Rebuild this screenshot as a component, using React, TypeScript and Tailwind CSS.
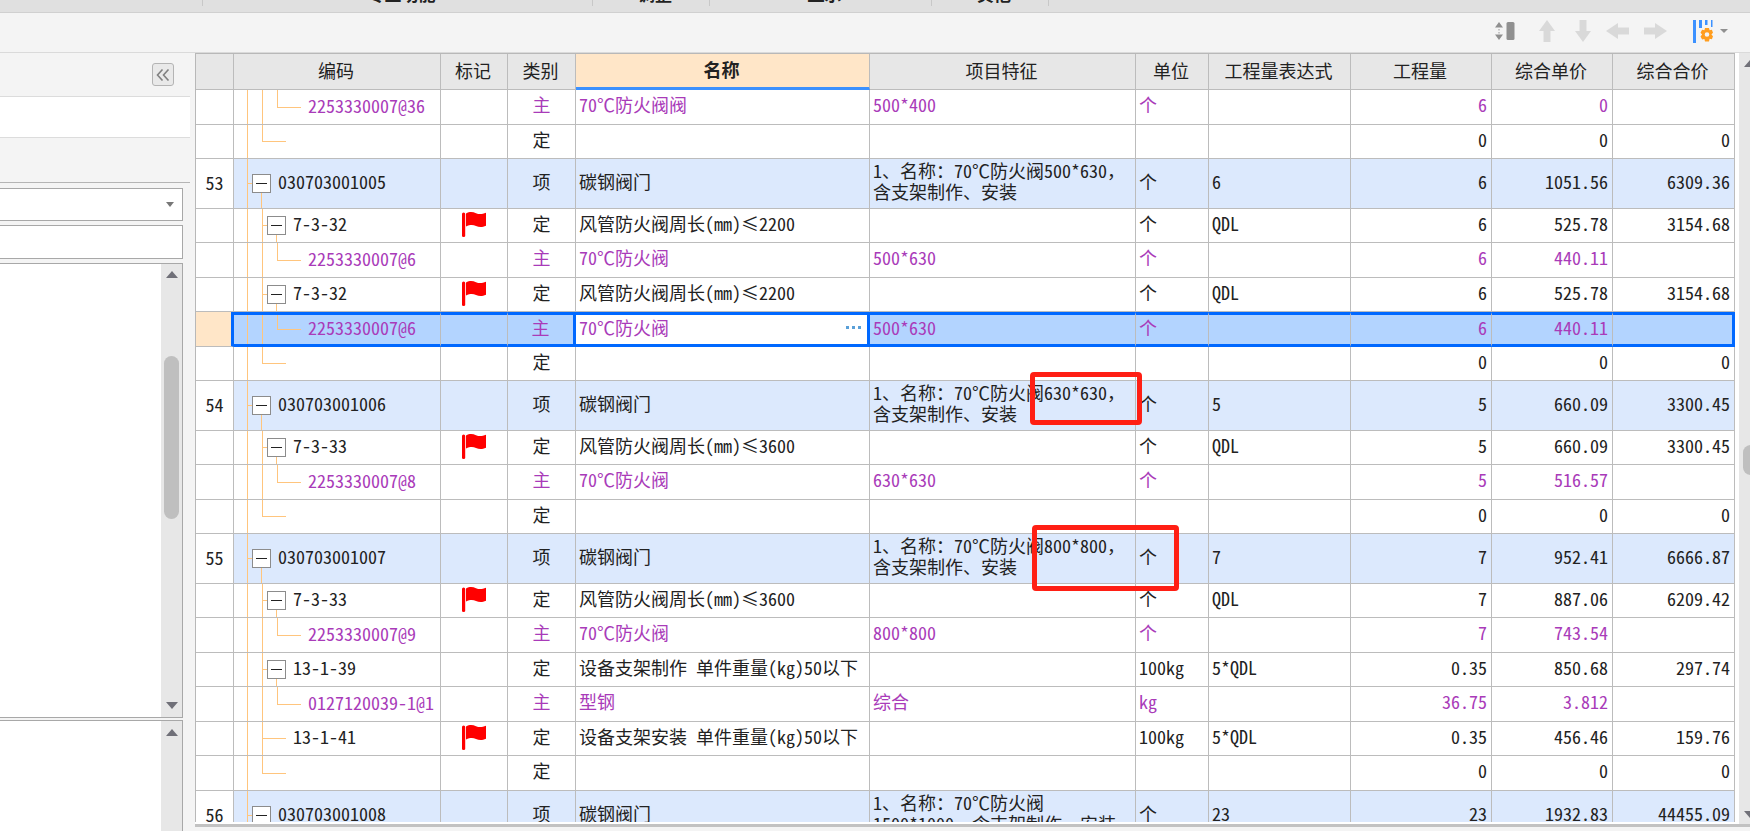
import type { ReactNode } from "react";

type Kind = "项" | "定" | "主";

interface Row {
  kind: Kind;
  index?: string;
  code?: string;
  level: 1 | 2 | 3;
  leaf?: boolean;
  last?: boolean;
  flag?: boolean;
  name?: string;
  feature?: string;
  unit?: string;
  expr?: string;
  qty: string;
  price?: string;
  total?: string;
  selected?: boolean;
  mark?: string;
}

const blank: Row = { kind: "定", level: 2, leaf: true, last: true, qty: "0", price: "0", total: "0" };

const rows: Row[] = [
  { kind: "主", level: 3, code: "2253330007@36", name: "70℃防火阀阀", feature: "500*400", unit: "个", qty: "6", price: "0" },
  blank,
  { kind: "项", level: 1, index: "53", code: "030703001005", name: "碳钢阀门", feature: "1、名称：70℃防火阀500*630，\n含支架制作、安装", unit: "个", expr: "6", qty: "6", price: "1051.56", total: "6309.36" },
  { kind: "定", level: 2, code: "7-3-32", flag: true, name: "风管防火阀周长(mm)≤2200", unit: "个", expr: "QDL", qty: "6", price: "525.78", total: "3154.68" },
  { kind: "主", level: 3, code: "2253330007@6", name: "70℃防火阀", feature: "500*630", unit: "个", qty: "6", price: "440.11" },
  { kind: "定", level: 2, code: "7-3-32", flag: true, name: "风管防火阀周长(mm)≤2200", unit: "个", expr: "QDL", qty: "6", price: "525.78", total: "3154.68" },
  { kind: "主", level: 3, code: "2253330007@6", name: "70℃防火阀", feature: "500*630", unit: "个", qty: "6", price: "440.11", selected: true },
  blank,
  { kind: "项", level: 1, index: "54", code: "030703001006", name: "碳钢阀门", feature: "1、名称：70℃防火阀630*630，\n含支架制作、安装", unit: "个", expr: "5", qty: "5", price: "660.09", total: "3300.45", mark: "left-[160px] w-[112px] h-[53px]" },
  { kind: "定", level: 2, code: "7-3-33", flag: true, name: "风管防火阀周长(mm)≤3600", unit: "个", expr: "QDL", qty: "5", price: "660.09", total: "3300.45" },
  { kind: "主", level: 3, code: "2253330007@8", name: "70℃防火阀", feature: "630*630", unit: "个", qty: "5", price: "516.57" },
  blank,
  { kind: "项", level: 1, index: "55", code: "030703001007", name: "碳钢阀门", feature: "1、名称：70℃防火阀800*800，\n含支架制作、安装", unit: "个", expr: "7", qty: "7", price: "952.41", total: "6666.87", mark: "left-[162px] w-[147px] h-[66px]" },
  { kind: "定", level: 2, code: "7-3-33", flag: true, name: "风管防火阀周长(mm)≤3600", unit: "个", expr: "QDL", qty: "7", price: "887.06", total: "6209.42" },
  { kind: "主", level: 3, code: "2253330007@9", name: "70℃防火阀", feature: "800*800", unit: "个", qty: "7", price: "743.54" },
  { kind: "定", level: 2, code: "13-1-39", name: "设备支架制作 单件重量(kg)50以下", unit: "100kg", expr: "5*QDL", qty: "0.35", price: "850.68", total: "297.74" },
  { kind: "主", level: 3, code: "0127120039-1@1", name: "型钢", feature: "综合", unit: "kg", qty: "36.75", price: "3.812" },
  { kind: "定", level: 2, leaf: true, code: "13-1-41", flag: true, name: "设备支架安装 单件重量(kg)50以下", unit: "100kg", expr: "5*QDL", qty: "0.35", price: "456.46", total: "159.76" },
  blank,
  { kind: "项", level: 1, index: "56", code: "030703001008", name: "碳钢阀门", feature: "1、名称：70℃防火阀\n1500*1000，含支架制作、安装", unit: "个", expr: "23", qty: "23", price: "1932.83", total: "44455.09" },
];

const headers = ["", "编码", "标记", "类别", "名称", "项目特征", "单位", "工程量表达式", "工程量", "综合单价", "综合合价"];

const ribbonGroups = [
  { label: "", width: "w-[203px]" },
  { label: "专业功能", width: "w-[390px]" },
  { label: "调整", width: "w-[117px]" },
  { label: "显示", width: "w-[222px]" },
  { label: "其他", width: "w-[117px]" },
];

function Triangle({ down = false, className = "" }: { down?: boolean; className?: string }) {
  return (
    <svg viewBox="0 0 14 7" className={`h-[7px] w-[14px] shrink-0 ${className}`} fill="#707078">
      <path d={down ? "M1 0h12L7 7z" : "M1 7h12L7 0z"} />
    </svg>
  );
}

function Flag() {
  return (
    <svg viewBox="0 0 24 25" className="mx-auto h-[25px] w-6" fill="#ff0000">
      <path d="M0 2q0-1.500 1.600-1.500T3.200 2v22q0 1-1.600 1T0 24z" />
      <path d="M4 1.500C8-.8 11 0 14 1.200s6 1.200 10-.4v13c-4 1.800-7 1.500-10 .2s-6-1.400-10 .6z" />
    </svg>
  );
}

function Through() {
  return <div className="h-full w-[15px] shrink-0 border-l border-[#ffc57d]" />;
}

// horizontal tick from the parent's line; the line stops half way on the last child
function Branch({ width, last = false }: { width: string; last?: boolean }) {
  return (
    <div className={`flex h-full shrink-0 flex-col ${width}`}>
      <div className="flex-1 border-b border-l border-[#ffc57d]" />
      <div className={`flex-1 border-[#ffc57d] ${last ? "" : "border-l"}`} />
    </div>
  );
}

function Toggle() {
  return (
    <div className="flex h-full w-[19px] shrink-0 flex-col items-center">
      <div className="flex-1" />
      <button aria-label="折叠" className="flex h-[19px] w-[19px] shrink-0 items-center justify-center border border-[#8c8c8c] bg-white">
        <span className="h-px w-[11px] bg-[#222]" />
      </button>
      <div className="w-px flex-1 bg-[#ffc57d]" />
    </div>
  );
}

function TreeCell({ row }: { row: Row }) {
  return (
    <div className="flex h-full items-center pl-[13px]">
      {row.level > 1 && <Through />}
      {row.level > 2 && <Through />}
      {row.level === 3 || row.leaf ? (
        <Branch width="w-6" last={row.level === 3 || row.last} />
      ) : (
        <>
          <Branch width="w-[5px]" />
          <Toggle />
        </>
      )}
      <span className="pb-1 pl-[7px]">{row.code}</span>
    </div>
  );
}

interface CellProps {
  row: Row;
  className?: string;
  edge?: boolean;
  children?: ReactNode;
}

function Cell({ row, className = "", edge = false, children }: CellProps) {
  const border = row.selected ? "border-y-[3px] border-y-[#0068ff]" : "border-b border-b-[#bcbcbc]";
  const right = row.selected && edge ? "border-r-[3px] border-r-[#0068ff]" : "border-r border-r-[#bcbcbc]";
  return <td className={`h-px ${right} ${border} ${className}`}>{children}</td>;
}

function GridRow({ row }: { row: Row }) {
  const height = row.kind === "项" ? "h-[50px]" : "odd:h-[35px] even:h-[34px]";
  const bg = row.selected ? "bg-[#b3d4ff]" : row.kind === "项" ? "bg-[#dce9fd]" : "bg-white";
  const color = row.kind === "主" ? "text-[#a93bb9]" : "text-[#222]";
  return (
    <tr className={`${height} ${bg} ${color}`}>
      <td className={`h-px border-b border-b-[#bcbcbc] pb-[3px] text-center text-[#222] ${row.selected ? "border-r-[3px] border-r-[#0068ff] bg-[#ffe6c8]" : "border-r border-r-[#bcbcbc] bg-white"}`}>
        {row.index}
      </td>
      <Cell row={row}>
        <TreeCell row={row} />
      </Cell>
      <Cell row={row} className="pb-[2px]">{row.flag && <Flag />}</Cell>
      <Cell row={row} edge className="pb-[5px] text-center">{row.kind}</Cell>
      <Cell row={row} edge className={row.selected ? "bg-white pb-[5px]" : "pb-[5px]"}>
        <div className="flex items-center justify-between pl-[3px] pr-1">
          <span>{row.name}</span>
          {row.selected && (
            <button aria-label="更多" className="flex gap-[3px] p-[2px]">
              <span className="h-[3px] w-[3px] bg-[#5aa0d8]" />
              <span className="h-[3px] w-[3px] bg-[#5aa0d8]" />
              <span className="h-[3px] w-[3px] bg-[#5aa0d8]" />
            </button>
          )}
        </div>
      </Cell>
      <Cell row={row} className="relative whitespace-pre pb-[5px] pl-[3px]">
        {row.feature}
        {row.mark && <span className={`absolute -top-[9px] z-10 rounded-[4px] border-[5px] border-[#ff1f14] ${row.mark}`} />}
      </Cell>
      <Cell row={row} className="pb-[5px] pl-[3px]">{row.unit}</Cell>
      <Cell row={row} className="pb-[5px] pl-[3px]">{row.expr}</Cell>
      <Cell row={row} className="pb-[5px] pr-1 text-right">{row.qty}</Cell>
      <Cell row={row} className="pb-[5px] pr-1 text-right">{row.price}</Cell>
      <Cell row={row} edge className="pb-[5px] pr-1 text-right">{row.total}</Cell>
    </tr>
  );
}

function CostTable() {
  return (
    <table className="w-full table-fixed border-separate border-spacing-0 whitespace-nowrap">
      <colgroup>
        <col className="w-[38px]" />
        <col className="w-[207px]" />
        <col className="w-[67px]" />
        <col className="w-[68px]" />
        <col className="w-[294px]" />
        <col />
        <col className="w-[73px]" />
        <col className="w-[142px]" />
        <col className="w-[141px]" />
        <col className="w-[121px]" />
        <col className="w-[122px]" />
      </colgroup>
      <thead>
        <tr className="h-9 text-[#222]">
          {headers.map((h) => (
            <th
              key={h}
              className={`border-r border-r-[#bcbcbc] pb-[2px] pr-[2px] ${h === "名称" ? "border-b-[3px] border-b-[#3c91ff] bg-[#ffe6c8] font-bold" : "border-b border-b-[#bcbcbc] bg-[#e7e7e7] font-normal"}`}
            >
              {h}
            </th>
          ))}
        </tr>
      </thead>
      <tbody>
        {rows.map((row, i) => (
          <GridRow key={i} row={row} />
        ))}
      </tbody>
    </table>
  );
}

function Toolbar() {
  return (
    <div className="flex h-10 items-center justify-end border-b border-[#dadada] bg-[#f4f4f4] pb-[3px] pr-[22px]">
      <button aria-label="行高" className="mr-6">
        <svg viewBox="0 0 20 20" className="h-5 w-5" fill="#909090">
          <path d="M0 6.500 4 1l4 5.500zM0 13.500 4 19l4-5.500z" />
          <path d="M3 8h2v1.500H3zM3 11h2v1.500H3z" fill="#c4c4c4" />
          <rect x="11.500" y="1" width="8" height="18" rx="1.500" />
        </svg>
      </button>
      <button aria-label="上移" className="mr-5">
        <svg viewBox="0 0 16 22" className="h-[22px] w-4" fill="#d9d9d9">
          <path d="M8 0l8 11h-4.500v11h-7V11H0z" />
        </svg>
      </button>
      <button aria-label="下移" className="mr-[15px]">
        <svg viewBox="0 0 16 22" className="h-[22px] w-4" fill="#d9d9d9">
          <path d="M8 22l8-11h-4.500V0h-7v11H0z" />
        </svg>
      </button>
      <button aria-label="左移" className="mr-[15px]">
        <svg viewBox="0 0 23 16" className="h-4 w-[23px]" fill="#d9d9d9">
          <path d="M0 8l12-8v4.500h11v7H12V16z" />
        </svg>
      </button>
      <button aria-label="右移" className="mr-[26px]">
        <svg viewBox="0 0 23 16" className="h-4 w-[23px]" fill="#d9d9d9">
          <path d="M23 8L11 0v4.500H0v7h11V16z" />
        </svg>
      </button>
      <button aria-label="列设置" className="flex items-center gap-[7px]">
        <svg viewBox="0 0 20 23" className="h-[23px] w-5">
          <path d="M0 0h3v23H0zM6 0h3v8H6zM12 0h2.500v5H12zM18 0h1.500v7H18z" fill="#3c91ff" />
          <path
            fillRule="evenodd"
            fill="#ff9d1e"
            d="M12 8h4l.6 2.300 2.300-.6 1.100 3-1.600 1.800 1.600 1.800-1.100 3-2.300-.5L16 21.500h-4l-.6-2.600-2.300.5-1.600-3 1.600-1.900-1.600-1.800 1.600-3 2.300.6zM14 12.200a2.300 2.300 0 1 0 0 4.600 2.300 2.300 0 0 0 0-4.600z"
          />
        </svg>
        <svg viewBox="0 0 8 4" className="h-1 w-2" fill="#909090">
          <path d="M0 0h8L4 4z" />
        </svg>
      </button>
    </div>
  );
}

function SidePanel() {
  return (
    <aside className="flex w-[195px] shrink-0 flex-col bg-[#f4f4f4]">
      <div className="flex h-[43px] items-center justify-end pr-[21px]">
        <button aria-label="收起" className="flex h-[23px] w-[22px] items-center justify-center rounded-[3px] border border-[#b4b4b4] bg-[#e9e9e9]">
          <svg viewBox="0 0 14 12" className="h-3 w-[14px]" fill="none" stroke="#808080" strokeWidth="1.600">
            <path d="M6.500.5 1.500 6l5 5.500M12.500.5l-5 5.500 5 5.500" />
          </svg>
        </button>
      </div>
      <div className="mr-[5px] h-[42px] shrink-0 border-y border-[#dcdcdc] bg-white" />
      <div className="mr-[5px] h-[45px] shrink-0 border-b border-[#b4b4b4]" />
      <div className="mr-3 mt-[5px] flex h-[33px] shrink-0 items-center border border-l-0 border-[#a8a8a8] bg-white">
        <select aria-label="专业" className="h-full min-w-0 flex-1 appearance-none bg-transparent outline-none" />
        <svg viewBox="0 0 8 5" className="mr-2 h-[5px] w-2" fill="#777">
          <path d="M0 0h8L4 5z" />
        </svg>
      </div>
      <input aria-label="查找" className="mr-3 mt-1 h-[34px] shrink-0 border border-l-0 border-[#a8a8a8] bg-white outline-none" />
      <div className="mr-3 mt-1 flex flex-1 justify-end border border-l-0 border-[#a8a8a8] bg-white">
        <div className="flex w-[21px] flex-col items-center bg-[#e7e7e7] pb-2 pt-[7px]">
          <Triangle />
          <div className="mt-[78px] h-[163px] w-[15px] rounded-full bg-[#bfbfbf]" />
          <Triangle down className="mt-auto" />
        </div>
      </div>
      <div className="mr-3 mt-[2px] flex h-[111px] shrink-0 justify-end border border-b-0 border-l-0 border-[#a8a8a8] bg-white">
        <div className="flex w-[21px] flex-col items-center bg-[#e7e7e7] pt-2">
          <Triangle />
        </div>
      </div>
    </aside>
  );
}

export default function App() {
  return (
    <div className="flex h-screen flex-col overflow-hidden bg-[#f4f4f4] font-['Noto_Sans_Mono_CJK_SC','Noto_Sans_CJK_SC',monospace] text-[18px] leading-[21px]">
      <div className="flex h-[13px] shrink-0 items-start border-b border-[#d0d0d0] bg-[#e0e0e0]">
        {ribbonGroups.map((g) => (
          <div key={g.width + g.label} className={`flex h-[6px] shrink-0 items-end justify-center overflow-hidden border-r border-[#c8c8c8] pb-1 pl-2 text-[17px] font-bold leading-[17px] text-[#222] ${g.width}`}>
            {g.label}
          </div>
        ))}
      </div>
      <Toolbar />
      <div className="flex min-h-0 flex-1">
        <SidePanel />
        <main className="flex min-w-0 flex-1 flex-col">
          <div className="flex min-h-0 flex-1 border-b-[3px] border-[#c2c2c2] bg-white pb-[2px]">
            <div className="min-w-0 flex-1 overflow-hidden border-l border-t border-[#b8b8b8]">
              <CostTable />
            </div>
            <div className="-mb-[2px] ml-1 flex w-[11px] shrink-0 flex-col overflow-hidden bg-[#e7e7e7] pb-[6px] pl-1 pt-[7px]">
              <Triangle />
              <div className="mt-[378px] h-[30px] w-[15px] shrink-0 rounded-full bg-[#bfbfbf]" />
              <Triangle down className="mt-auto" />
            </div>
          </div>
          <div className="h-1 shrink-0" />
        </main>
      </div>
    </div>
  );
}
